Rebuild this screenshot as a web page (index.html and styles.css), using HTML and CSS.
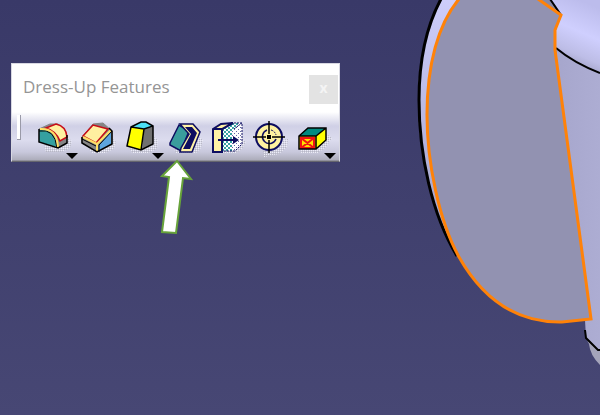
FILE: index.html
```html
<!DOCTYPE html>
<html lang="en">
<head>
    <meta charset="UTF-8">
    <meta name="viewport" content="width=device-width, initial-scale=1.0">
    <title>Dress-Up Features</title>
    <link rel="stylesheet" href="styles.css">
</head>
<body>
    <main class="viewport">
        <!-- 3D part -->
        <svg class="scene" viewBox="0 0 600 415" preserveAspectRatio="xMaxYMin slice" aria-hidden="true">
            <defs>
                <linearGradient id="body" x1="0" x2="1">
                    <stop offset="0" stop-color="#a6a6cc"/>
                    <stop offset="1" stop-color="#adadd3"/>
                </linearGradient>
                <linearGradient id="boss" x1="0.6" y1="0" x2="0.3" y2="1">
                    <stop offset="0" stop-color="#bcbcec"/>
                    <stop offset="0.4" stop-color="#cfcffe"/>
                    <stop offset="0.7" stop-color="#bdbde6"/>
                    <stop offset="1" stop-color="#8d8db0"/>
                </linearGradient>
                <linearGradient id="rim" x1="0" y1="0" x2="0" y2="1">
                    <stop offset="0" stop-color="#cdcdfa"/>
                    <stop offset="1" stop-color="#a0a0c6"/>
                </linearGradient>
            </defs>
            <path fill="url(#body)" d="M555 40 L600 70 V350 H598 L586 338 L585 320 Z"/>
            <path fill="#a5a5bb" d="M586 338 L598 350 H600 V365 Q590 355 589 344 Z"/>
            <path fill="url(#boss)" d="M550 0 H600 V73 Q574 64 556 48 V30 L561 15 Z"/>
            <path fill="#8888a4" d="M538 0 H550 L560 14 Z"/>
            <path fill="url(#rim)" d="M441 0 Q418 40 418 100 C418 155 432 215 457 256 L500 150 L470 0 Z"/>
            <path fill="#9292b1" d="M458 0 C438 24 427 65 427 115 C427 162 439 221 459 257 C480 294 512 323 562 323 L591 319 L555 50 V30 L561 15 L539 0 Z"/>
            <g fill="none" stroke="#000" stroke-width="2">
                <path stroke-width="3" d="M441 -1 Q419 40 419 100 C419 155 432 215 457 256"/>
                <path d="M550 -1 L561 15 M556 48 Q574 63 600 73 M585 330 L586 338 L598 350 H600"/>
            </g>
            <path fill="none" stroke="#ff8208" stroke-width="3" d="M459 -1 C438 24 427 65 427 115 C427 162 439 221 459 257 C480 294 512 323 562 322 L591 319 L555 50 V30 L561 15 L538 -1"/>
        </svg>

        <section class="toolbar" aria-labelledby="toolbar-title">
            <header class="titlebar">
                <h1 id="toolbar-title">Dress-Up Features</h1>
                <button class="close" type="button" aria-label="Close">x</button>
            </header>
            <div class="tools">
                <span class="grip"></span>

                <button class="tool" type="button" aria-label="Edge Fillet">
                    <svg viewBox="0 0 43 46">
                        <defs>
                            <pattern id="dither" width="2" height="2" patternUnits="userSpaceOnUse">
                                <path fill="#b9b9c3" d="M0 0h1v1h-1z"/>
                                <path fill="#ededf5" d="M1 1h1v1h-1z"/>
                            </pattern>
                        </defs>
                        <path class="shade" d="M36 23 L40 26 L38 33 L30 37 H14 L12 31 Z"/>
                        <path fill="#858585" stroke="#858585" d="M7 14 L18 9 H26 L32 14 L35 28 L26 33 Z"/>
                        <path fill="#35a0a0" d="M7 15 H13 Q22 17 25 32 L7 27 Z"/>
                        <path fill="#fff0a0" stroke="#c80c18" stroke-width="1.5" d="M14 13 L24 9 Q34 11 35 22 L28 26 Q24 16 14 13 Z"/>
                        <path fill="none" stroke="#000" stroke-width="1" d="M7 16 Q23 13 25 33"/>
                        <path fill="none" stroke="#ffe066" stroke-width="2" d="M8 14 Q25 13 26 32"/>
                        <path fill="none" stroke="#000" stroke-width="1.5" d="M7 14 V27 L26 33 L35 28 V20"/>
                    </svg>
                    <span class="more"></span>
                </button>

                <button class="tool" type="button" aria-label="Chamfer">
                    <svg viewBox="0 0 43 46">
                        <path class="shade" d="M38 24 L41 27 L39 34 L30 38 H17 L14 34 Z"/>
                        <path fill="#858585" stroke="#858585" d="M7 22 L18 9 L28 8 L37 16 V29 L22 36 L7 28 Z"/>
                        <path fill="#5da5df" d="M24 30 L36 16 V29 L23 36 Z"/>
                        <path fill="#fff0a0" stroke="#c80c18" stroke-width="1.5" d="M8 21 L18 10 L33 14 L21 28 Z"/>
                        <path fill="none" stroke="#000" stroke-width="1" d="M37 16 L24 30 V37 M7 24 L21 31"/>
                        <path fill="none" stroke="#ffe066" stroke-width="2" d="M36 15 L22 29 V36 M8 22 L22 29"/>
                        <path fill="none" stroke="#000" stroke-width="1.5" d="M7 22 V28 L22 37 L37 29 V16 L34 13"/>
                    </svg>
                </button>

                <button class="tool" type="button" aria-label="Draft Angle">
                    <svg viewBox="0 0 43 46">
                        <path class="shade" d="M36 22 L40 25 L39 34 L30 38 H14 L12 34 Z"/>
                        <path fill="#707070" d="M26 14 L35 12 V29 L24 35 Z"/>
                        <path fill="#4be0f5" d="M14 11 L23 7 H28 L35 11 L26 14 Z"/>
                        <path fill="#ff0" d="M13 12 L26 14 L23 35 L9 31 Z"/>
                        <path fill="none" stroke="#000" stroke-width="1.5" d="M13 12 L23 7 H28 L35 11 V29 L23 35 L9 31 Z M13 12 L26 14 L35 11 M26 14 L23 35"/>
                    </svg>
                    <span class="more"></span>
                </button>

                <button class="tool" type="button" aria-label="Shell">
                    <svg viewBox="0 0 43 46">
                        <path class="shade" d="M38 22 L42 25 L40 33 L35 38 H15 L13 34 Z"/>
                        <path fill="#3a9d9d" stroke="#0d0d60" stroke-width="1.5" d="M9 28 L18 10 L28 16 L20 36 L9 30 Z"/>
                        <path fill="#fff2a5" stroke="#0d0d60" stroke-width="1.5" d="M19 9 H32 L39 17 L31 37 H19 L20 33 L28 19 Z"/>
                        <path fill="#0d0d60" d="M24 12 H31 L36 18 L29 34 H22 L30 19 Z"/>
                    </svg>
                </button>

                <button class="tool" type="button" aria-label="Thickness">
                    <svg viewBox="0 0 43 46">
                        <defs>
                            <pattern id="mesh" width="4" height="4" patternUnits="userSpaceOnUse">
                                <path fill="#3aa3a3" d="M0 0h2v2h-2z M2 2h2v2h-2z"/>
                            </pattern>
                            <pattern id="mesh-light" width="4" height="4" patternUnits="userSpaceOnUse">
                                <path fill="#6464a4" d="M0 0h1v1h-1z M2 2h1v1h-1z"/>
                            </pattern>
                        </defs>
                        <path class="shade" d="M38 24 L42 27 L38 34 L32 38 H12 L11 36 Z"/>
                        <path fill="#fff" d="M18 14 L27 8 H38 V29 L31 36 H18 Z"/>
                        <path fill="url(#mesh)" d="M18 13 L26 8 H37 L28 15 V36 H18 Z"/>
                        <path fill="url(#mesh-light)" d="M28 14 L37 8 V29 L30 36 H28 Z"/>
                        <path fill="none" stroke="#0d0d60" stroke-dasharray="2 1" d="M27 8 H38 V29 L31 36 H18 M30 14 L38 8"/>
                        <path fill="#fff2a5" stroke="#0d0d60" stroke-width="2" d="M9 14 L17 9 L29 8 L18 14 V37 H9 Z M9 14 H18"/>
                        <path fill="none" stroke="#0d0d60" stroke-width="2" d="M14 25 H32"/>
                        <path fill="#0d0d60" d="M29 21 L35 25 L29 29 Z"/>
                    </svg>
                </button>

                <button class="tool" type="button" aria-label="Thread/Tap">
                    <svg viewBox="0 0 43 46">
                        <path class="shade" d="M34 25 L41 24 L40 32 L32 39 L17 42 L16 36 Z"/>
                        <circle cx="22" cy="22" r="13" fill="#fff2a0" stroke="#0d0d60" stroke-width="2"/>
                        <path fill="none" stroke="#0d0d60" stroke-width="1.5" d="M20 15 A7 7 0 1 0 29 24"/>
                        <path fill="none" stroke="#0d0d60" stroke-dasharray="2 1" d="M24 15 A7 7 0 0 1 29 20"/>
                        <path fill="none" stroke="#000" stroke-width="1.5" d="M22 6 V19 M22 25 V38 M6 22 H19 M25 22 H38"/>
                        <path fill="#000" d="M20 20h4v4h-4z"/>
                    </svg>
                </button>

                <button class="tool" type="button" aria-label="Remove Face">
                    <svg viewBox="0 0 43 46">
                        <path class="shade" d="M38 20 L42 23 L36 32 L28 38 H11 L10 35 Z"/>
                        <path fill="#008a80" d="M9 21 L18 13 H36 L26 21 Z"/>
                        <path fill="#ff0" d="M26 21 L36 13 V25 L26 34 Z"/>
                        <path fill="#ffe000" d="M9 21 H26 V34 H9 Z"/>
                        <path fill="none" stroke="#f01414" stroke-width="2" d="M11 23 H24 V33 H11 Z M11 23 L24 33 M24 23 L11 33"/>
                        <path fill="none" stroke="#000" stroke-width="1.5" d="M9 21 L18 13 H36 V25 L26 34 H9 Z M9 21 H26 L36 13 M26 21 V34"/>
                    </svg>
                    <span class="more"></span>
                </button>
            </div>

            <!-- arrow pointing at Shell -->
            <svg class="pointer" viewBox="0 0 34 80" aria-hidden="true">
                <path fill="#fff" stroke="#67a33a" stroke-width="2" stroke-linejoin="miter" d="M18 3 L32 21 L24 20 L17 75 L3 74 L10 19 L3 18 Z"/>
            </svg>
        </section>
    </main>
</body>
</html>
```

FILE: styles.css
```css
* {
    box-sizing: border-box;
}
body {
    margin: 0;
    font-family: "Open Sans", "Noto Sans", sans-serif;
}
.viewport {
    position: relative;
    min-height: 100vh;
    padding: 63px 11px;
    overflow: hidden;
    background: linear-gradient(#393968, #474774);
}
.scene {
    position: absolute;
    top: 0;
    left: 0;
    width: 100%;
    height: 100%;
}
.toolbar {
    position: relative;
    width: fit-content;
    background: linear-gradient(#fff 48px, #d0d0e6 62px, #dcdcee 76px, #c8c8dc 88px, #acacba 96px, #77777f);
    border: 1px solid #d8d8e2;
    border-bottom-color: #66666e;
}
.titlebar {
    display: flex;
    align-items: center;
    justify-content: space-between;
    height: 50px;
    padding-left: 11px;
}
h1 {
    margin: 0;
    padding-bottom: 5px;
    color: #959595;
    font-size: 17px;
    font-weight: 400;
    line-height: 24px;
}
.close {
    width: 29px;
    height: 29px;
    margin-right: 1px;
    padding: 0 0 3px;
    border: none;
    background-color: #e3e3e3;
    color: #f4f4f4;
    font-family: inherit;
    font-size: 14px;
    font-weight: 700;
    line-height: 24px;
}
.tools {
    display: flex;
    padding: 1px 6px 0 5px;
}
.grip {
    width: 4px;
    height: 25px;
    margin-right: 11px;
    background-color: #fff;
    border-right: 1px solid #9a9aa8;
    border-bottom: 1px solid #9a9aa8;
}
.tool {
    position: relative;
    width: 43px;
    height: 46px;
    padding: 0;
    border: none;
    background: none;
}
.tool svg {
    display: block;
    width: 43px;
    height: 46px;
    overflow: visible;
}
.shade {
    fill: url(#dither);
}
.more {
    position: absolute;
    right: -3px;
    bottom: 2px;
    border: 6px solid transparent;
    border-top-color: #000;
    border-bottom: none;
}
.pointer {
    position: absolute;
    top: 94px;
    left: 147px;
    width: 34px;
    height: 80px;
}
```
